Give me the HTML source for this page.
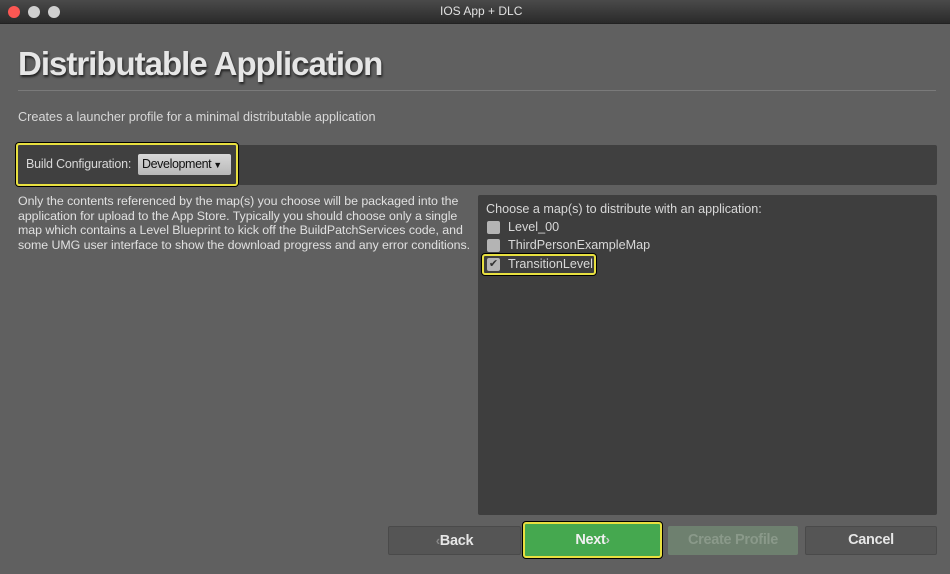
<!DOCTYPE html>
<html><head><meta charset="utf-8"><style>
*{margin:0;padding:0;box-sizing:border-box}
body{width:950px;height:574px;background:#606060;font-family:"Liberation Sans",sans-serif;color:#d8d8d8;position:relative;overflow:hidden}
.abs{position:absolute}
.tb{left:0;top:0;width:950px;height:24px;background:linear-gradient(#4a4a4a,#2a2a2a);border-bottom:1px solid #222}
.dot{top:6px;width:12px;height:12px;border-radius:50%;background:#d0d0d0}
.t{white-space:nowrap;font-size:12.5px;letter-spacing:0}
.btn{top:526px;height:29px;border-radius:2px;font-weight:bold;font-size:14.5px;text-align:center;line-height:29px;letter-spacing:-0.3px}
</style></head><body>
<div class="abs tb"></div>
<div class="abs dot" style="left:8px;background:#fc5753"></div>
<div class="abs dot" style="left:28px"></div>
<div class="abs dot" style="left:48px"></div>
<div class="abs t" style="left:440px;top:4px;font-size:12px;color:#e0e0e0">IOS App + DLC</div>
<div class="abs" style="left:18px;top:45px;font-size:33px;font-weight:bold;color:#e6e6e6;letter-spacing:-1px;text-shadow:1px 2px 2px #222;white-space:nowrap">Distributable Application</div>
<div class="abs" style="left:18px;top:90px;width:918px;height:1px;background:#7a7a7a"></div>
<div class="abs t" style="left:18px;top:110px;font-size:12.7px">Creates a launcher profile for a minimal distributable application</div>
<div class="abs" style="left:18px;top:145px;width:919px;height:40px;background:#404040;border-radius:2px"></div>
<div class="abs" style="left:16px;top:143px;width:222px;height:43px;border:2px solid #e8e040;border-radius:3px;box-shadow:0 0 0 1px #000"></div>
<div class="abs t" style="left:26px;top:157px;font-size:12.5px;letter-spacing:-0.2px">Build Configuration:</div>
<div class="abs" style="left:138px;top:154px;width:93px;height:21px;background:linear-gradient(#d8d8d8,#b8b8b8);border-radius:2px;color:#111;font-size:12.5px;line-height:21px;padding-left:4px;white-space:nowrap;letter-spacing:-0.4px">Development<span style="font-size:9px;margin-left:2px">▼</span></div>
<div class="abs t" style="left:18px;top:194px;line-height:14.5px;color:#e0e0e0;font-size:12.4px;letter-spacing:-0.05px">Only the contents referenced by the map(s) you choose will be packaged into the<br>application for upload to the App Store. Typically you should choose only a single<br>map which contains a Level Blueprint to kick off the BuildPatchServices code, and<br>some UMG user interface to show the download progress and any error conditions.</div>
<div class="abs" style="left:478px;top:195px;width:459px;height:320px;background:#3e3e3e;border-radius:2px"></div>
<div class="abs t" style="left:486px;top:202px;font-size:12.6px">Choose a map(s) to distribute with an application:</div>
<div class="abs" style="left:487px;top:221px;width:13px;height:13px;background:#b4b4b4;border-radius:2px"></div>
<div class="abs t" style="left:508px;top:220px;font-size:12.6px">Level_00</div>
<div class="abs" style="left:487px;top:239px;width:13px;height:13px;background:#b4b4b4;border-radius:2px"></div>
<div class="abs t" style="left:508px;top:238px;font-size:12.6px">ThirdPersonExampleMap</div>
<div class="abs" style="left:482px;top:254px;width:114px;height:21px;border:2px solid #e8e040;border-radius:3px;box-shadow:0 0 0 1px #000"></div>
<div class="abs" style="left:487px;top:258px;width:13px;height:13px;background:#b4b4b4;border-radius:2px;color:#333;font-size:11px;line-height:13px;text-align:center">✔</div>
<div class="abs t" style="left:508px;top:257px;font-size:12.6px">TransitionLevel</div>
<div class="abs btn" style="left:388px;width:133px;background:#555;border:1px solid #4a4a4a;color:#e6e6e6;line-height:27px"><span style="font-size:13px;color:#888">‹</span>Back</div>
<div class="abs" style="left:523px;top:522px;width:139px;height:36px;border:2px solid #e8e040;border-radius:3px;box-shadow:0 0 0 1px #000;background:#45a84f"></div>
<div class="abs btn" style="left:525px;top:525px;width:135px;color:#f0f0f0">Next<span style="font-size:13px;color:#ccc">›</span></div>
<div class="abs btn" style="left:668px;width:130px;background:#6e806f;color:#8a998a">Create Profile</div>
<div class="abs btn" style="left:805px;width:132px;background:#555;border:1px solid #4a4a4a;color:#e6e6e6;line-height:27px">Cancel</div>
</body></html>
